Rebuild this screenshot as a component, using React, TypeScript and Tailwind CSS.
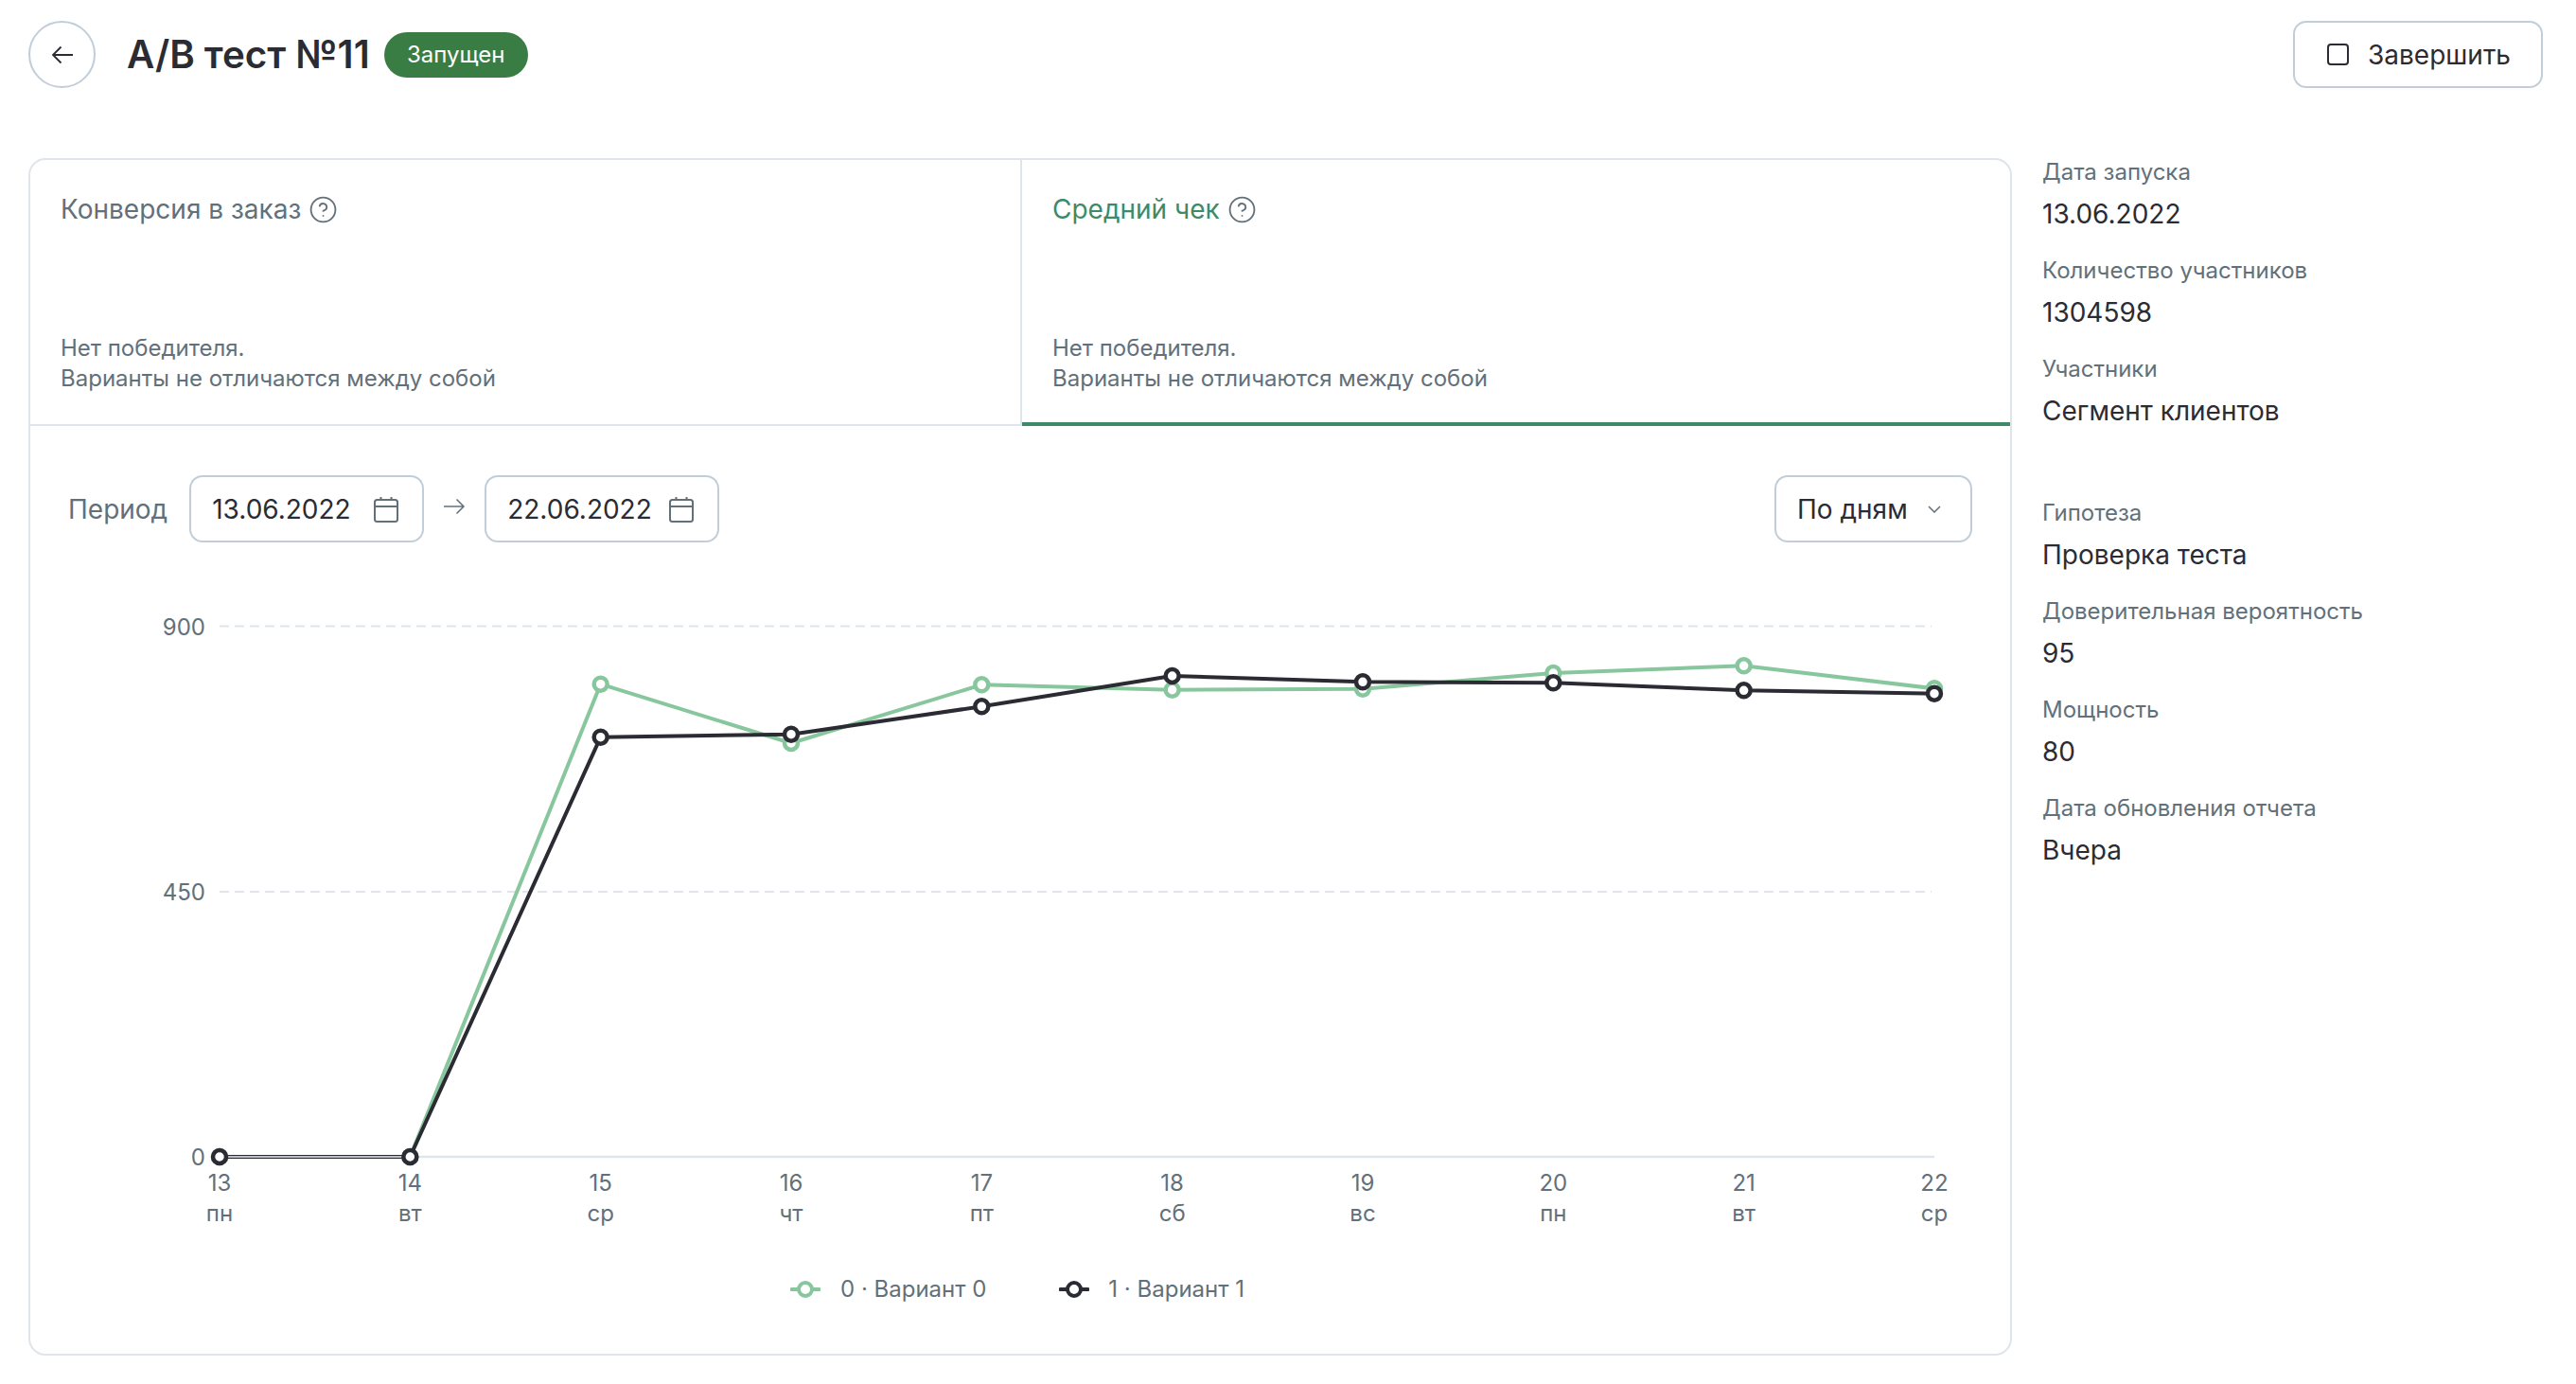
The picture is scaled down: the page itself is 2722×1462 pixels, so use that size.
import React from "react";
import { CircleHelp } from "lucide-react";

const FONT = "font-['Inter','Noto_Sans',sans-serif]";
const xs = Array.from({ length: 10 }, (_, i) => 232 + i * 201.33);
const green = [1222, 1222, 722.7, 785, 723.3, 728.7, 727.7, 711, 703.3, 727.3];
const black = [1222, 1222, 778.7, 775.7, 746.3, 714, 720.3, 721.3, 729.3, 732.7];
const days = ["пн", "вт", "ср", "чт", "пт", "сб", "вс", "пн", "вт", "ср"];

function Calendar() {
  return (
    <svg width="28" height="28" viewBox="0 0 28 28" fill="none" stroke="#62707a" strokeWidth="2" className="shrink-0">
      <rect x="2" y="4" width="24" height="23" rx="2.5" />
      <path d="M2 11h24M8.500 1v4M19.500 1v4" />
    </svg>
  );
}

function DateField({ value }: { value: string }) {
  return (
    <div className="flex h-[71px] w-[248px] items-center justify-between rounded-[14px] border-2 border-[#c1ced9] bg-white pl-[22px] pr-[24px]">
      <span className="text-[28px] leading-[36px] text-[#2b2c33]">{value}</span>
      <Calendar />
    </div>
  );
}

function Tab({ title, active, titleClass }: { title: string; active?: boolean; titleClass: string }) {
  return (
    <div
      className={
        active
          ? "flex h-[281px] flex-1 flex-col justify-between border-b-4 border-[#3d8a68] pl-[32px] pt-[32px] pb-[30px]"
          : "flex h-[281px] w-[1048px] flex-col justify-between border-r-2 border-b-2 border-r-[#dfe5ea] border-b-[#dfe5ea] pl-[32px] pt-[32px] pb-[32px]"
      }
    >
      <div className={`flex items-center gap-[8px] text-[28px] leading-[40px] ${titleClass}`}>
        <span>{title}</span>
        <CircleHelp size={31} strokeWidth={1.4} color="#62707a" />
      </div>
      <div className="text-[24px] leading-[32px] text-[#62707a]">
        <div>Нет победителя.</div>
        <div>Варианты не отличаются между собой</div>
      </div>
    </div>
  );
}

function Info({ label, value }: { label: string; value: string }) {
  return (
    <div className="mb-[23px]">
      <div className="pt-[1px] text-[24px] leading-[32px] text-[#62707a]">{label}</div>
      <div className="mt-[8px] text-[28px] leading-[40px] text-[#2b2c33]">{value}</div>
    </div>
  );
}

function Marker({ x, y, color }: { x: number; y: number; color: string }) {
  return <circle cx={x} cy={y} r="7" fill="#fff" stroke={color} strokeWidth="4.500" />;
}

function LegendMark({ color }: { color: string }) {
  return (
    <svg width="32" height="20" viewBox="0 0 32 20" className="shrink-0">
      <path d="M1.500 10h29" stroke={color} strokeWidth="4" strokeLinecap="round" />
      <circle cx="16" cy="10" r="7" fill="#fff" stroke={color} strokeWidth="4" />
    </svg>
  );
}

function Chart() {
  const path = (ys: number[]) => xs.map((x, i) => `${i ? "L" : "M"}${x} ${ys[i]}`).join(" ");
  const labelClass = "fill-[#62707a] text-[24px]";
  return (
    <svg width="2092" height="700" viewBox="32 600 2092 700" className="block">
      <path d="M232 661.500H2041M232 942H2041" stroke="#dfe5ea" strokeWidth="2" strokeDasharray="10 6" />
      <path d="M232 1222H2044" stroke="#dfe5ea" strokeWidth="2.500" />
      <text x="217" y="671" textAnchor="end" className={labelClass}>900</text>
      <text x="217" y="951" textAnchor="end" className={labelClass}>450</text>
      <text x="217" y="1231" textAnchor="end" className={labelClass}>0</text>
      {xs.map((x, i) => (
        <g key={i}>
          <text x={x} y="1258" textAnchor="middle" className={labelClass}>{13 + i}</text>
          <text x={x} y="1290" textAnchor="middle" className={labelClass}>{days[i]}</text>
        </g>
      ))}
      <path d={path(green)} fill="none" stroke="#88c79d" strokeWidth="4" strokeLinejoin="round" />
      {xs.map((x, i) => <Marker key={i} x={x} y={green[i]} color="#88c79d" />)}
      <path d={path(black)} fill="none" stroke="#2b2c33" strokeWidth="4" strokeLinejoin="round" />
      <path d="M232 1222H433" stroke="#eef1f4" strokeWidth="1.600" />
      {xs.map((x, i) => <Marker key={i} x={x} y={black[i]} color="#2b2c33" />)}
    </svg>
  );
}

export default function App() {
  return (
    <div className={`${FONT} min-h-[1462px] bg-white pl-[30px] pr-[35px] pt-[22px]`}>
      <header className="flex h-[71px] items-center justify-between">
        <div className="flex items-center">
          <button className="flex h-[71px] w-[71px] items-center justify-center rounded-full border-2 border-[#c1ced9] bg-white">
            <svg width="24" height="20" viewBox="0 0 24 20" fill="none" stroke="#2b2c33" strokeWidth="1.800">
              <path d="M23 10H2M10.500 1.500L2 10l8.500 8.500" />
            </svg>
          </button>
          <h1 className="ml-[33px] text-[40.3px] font-semibold leading-[48px] text-[#2b2c33]">А/В тест №11</h1>
          <span className="ml-[15px] flex h-[48px] w-[152px] items-center justify-center rounded-full bg-[#3a7d44] text-[24px] text-white">
            Запущен
          </span>
        </div>
        <button className="flex h-[71px] w-[264px] items-center gap-[20px] rounded-[14px] border-2 border-[#c1ced9] bg-white pl-[34px] text-[28px] text-[#2b2c33]">
          <span className="h-[23px] w-[23px] rounded-[4px] border-2 border-[#2b2c33]" />
          <span>Завершить</span>
        </button>
      </header>

      <main className="mt-[74px] flex">
        <section className="h-[1265px] w-[2096px] shrink-0 rounded-[18px] border-2 border-[#dfe5ea]">
          <div className="flex">
            <Tab title="Конверсия в заказ" titleClass="text-[#62707a]" />
            <Tab title="Средний чек" active titleClass="text-[#3d8a68]" />
          </div>
          <div className="mt-[52px] flex items-center pl-[40px] pr-[40px]">
            <span className="mr-[23px] text-[28px] leading-[36px] text-[#62707a]">Период</span>
            <DateField value="13.06.2022" />
            <svg width="24" height="18" viewBox="0 0 24 18" fill="none" stroke="#62707a" strokeWidth="1.500" className="mx-[20px] mb-[6px]">
              <path d="M1 9h21M14.500 1.500L22 9l-7.500 7.500" />
            </svg>
            <DateField value="22.06.2022" />
            <div className="ml-auto flex h-[71px] w-[209px] items-center justify-between rounded-[14px] border-2 border-[#c1ced9] bg-white pl-[22px] pr-[31px]">
              <span className="text-[28px] leading-[36px] text-[#2b2c33]">По дням</span>
              <svg width="14" height="8" viewBox="0 0 14 8" fill="none" stroke="#62707a" strokeWidth="1.500">
                <path d="M1 1l6 6 6-6" />
              </svg>
            </div>
          </div>
          <div className="mt-[27px]">
            <Chart />
          </div>
          <div className="mt-[46px] flex items-center pl-[803px] text-[24px] leading-[32px] text-[#62707a]">
            <LegendMark color="#88c79d" />
            <span className="ml-[21px]">0 · Вариант 0</span>
            <span className="ml-[77px]"><LegendMark color="#2b2c33" /></span>
            <span className="ml-[20px]">1 · Вариант 1</span>
          </div>
        </section>

        <aside className="-mt-[2px] ml-[32px]">
          <Info label="Дата запуска" value="13.06.2022" />
          <Info label="Количество участников" value="1304598" />
          <Info label="Участники" value="Сегмент клиентов" />
          <div className="h-[48px]" />
          <Info label="Гипотеза" value="Проверка теста" />
          <Info label="Доверительная вероятность" value="95" />
          <Info label="Мощность" value="80" />
          <Info label="Дата обновления отчета" value="Вчера" />
        </aside>
      </main>
    </div>
  );
}
